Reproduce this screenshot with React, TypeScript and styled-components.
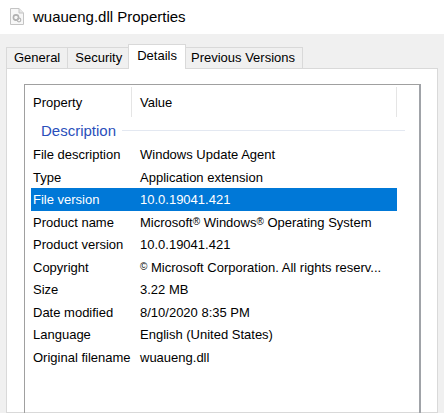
import React from 'react'
import styled, { createGlobalStyle } from 'styled-components'

const GlobalStyle = createGlobalStyle`
  html, body {
    margin: 0;
    padding: 0;
    background: #f0f0f0;
  }
  body {
    font-family: "Liberation Sans", Arial, sans-serif;
    color: #000;
  }
`

const Window = styled.div`
  width: 444px;
  height: 413px;
  overflow: hidden;
  display: flex;
  flex-direction: column;
  background: #f0f0f0;
`

const TitleBar = styled.div`
  height: 34px;
  background: #fff;
  display: flex;
  align-items: center;
  padding-left: 10px;
  gap: 9px;
  font-size: 15px;
  box-sizing: border-box;
  padding-bottom: 2px;
`

const Body = styled.div`
  flex: 1;
  display: flex;
  flex-direction: column;
  padding: 10px 6px 0 6px;
  min-height: 0;
`

const TabStrip = styled.div`
  display: flex;
  align-items: flex-end;
  height: 25px;
  margin-bottom: -1px;
  position: relative;
  z-index: 1;
`

const Tab = styled.div<{ $active?: boolean }>`
  box-sizing: border-box;
  height: ${p => (p.$active ? '25px' : '22px')};
  padding: ${p => (p.$active ? '0 8px 3px' : '0 7px 1px')};
  margin: ${p => (p.$active ? '0 -2px 0 -2px' : '0 0 0 -1px')};
  border: 1px solid #d9d9d9;
  border-bottom: ${p => (p.$active ? 'none' : '1px solid #d9d9d9')};
  background: ${p => (p.$active ? '#fff' : '#f0f0f0')};
  position: relative;
  z-index: ${p => (p.$active ? 2 : 1)};
  display: flex;
  align-items: center;
  font-size: 13px;
  white-space: nowrap;
  &:first-child {
    margin-left: 0;
  }
`

const Panel = styled.div`
  flex: 1;
  background: #fff;
  border: 1px solid #d9d9d9;
  padding: 15px 16px 0 17px;
  min-height: 0;
`

const ListView = styled.div`
  border: 1px solid #a0a0a0;
  border-right: 2px solid #a0a3a8;
  height: 400px;
  box-sizing: border-box;
  font-size: 13px;
`

const Header = styled.div`
  height: 32px;
  display: flex;
  align-items: stretch;
`

const HeaderCell = styled.div<{ $w: number }>`
  width: ${p => p.$w}px;
  box-sizing: border-box;
  padding-left: 8px;
  display: flex;
  align-items: center;
  border-right: 1px solid #e5e5e5;
  margin-top: 2px;
`

const GroupHeader = styled.div`
  height: 26px;
  display: flex;
  align-items: center;
  padding-left: 16px;
  padding-right: 14px;
  gap: 6px;
  font-size: 15px;
  color: #2a4fbb;
`

const GroupLine = styled.div`
  flex: 1;
  height: 1px;
  background: #e3e8f1;
`

const Row = styled.div<{ $selected?: boolean }>`
  height: 22.5px;
  width: 366px;
  margin-left: 6px;
  display: flex;
  align-items: center;
  padding-top: 1px;
  box-sizing: border-box;
  background: ${p => (p.$selected ? '#0078d7' : 'transparent')};
  color: ${p => (p.$selected ? '#fff' : '#000')};
  white-space: nowrap;
`

const PropCell = styled.div`
  width: 107px;
  padding-left: 2px;
  box-sizing: border-box;
`

const ValueCell = styled.div`
  padding-left: 2px;
`

const Mark = styled.span`
  font-size: 10px;
  vertical-align: 2px;
`

const FileIcon = () => (
  <svg width="14" height="17" viewBox="0 0 14 17">
    <path d="M0.5 0.5 H9 L13.5 5 V16.5 H0.5 Z" fill="#f7f7f7" stroke="#c4c4c4" />
    <path d="M9 0.5 V5 H13.5" fill="#e6e6e6" stroke="#c4c4c4" />
    <circle cx="6" cy="9.5" r="2.6" fill="none" stroke="#b0b0b0" strokeWidth="1.6" />
    <circle cx="9" cy="12" r="1.8" fill="none" stroke="#b8b8b8" strokeWidth="1.2" />
  </svg>
)

const TABS = ['General', 'Security', 'Details', 'Previous Versions']

const ROWS: { prop: string; value: React.ReactNode }[] = [
  { prop: 'File description', value: 'Windows Update Agent' },
  { prop: 'Type', value: 'Application extension' },
  { prop: 'File version', value: '10.0.19041.421' },
  {
    prop: 'Product name',
    value: (
      <>
        Microsoft<Mark>®</Mark> Windows<Mark>®</Mark> Operating System
      </>
    ),
  },
  { prop: 'Product version', value: '10.0.19041.421' },
  {
    prop: 'Copyright',
    value: (
      <>
        <Mark>©</Mark> Microsoft Corporation. All rights reserv...
      </>
    ),
  },
  { prop: 'Size', value: '3.22 MB' },
  { prop: 'Date modified', value: '8/10/2020 8:35 PM' },
  { prop: 'Language', value: 'English (United States)' },
  { prop: 'Original filename', value: 'wuaueng.dll' },
]

export default function App() {
  return (
    <>
      <GlobalStyle />
      <Window>
        <TitleBar>
          <FileIcon />
          <span>wuaueng.dll Properties</span>
        </TitleBar>
        <Body>
          <TabStrip>
            {TABS.map(t => (
              <Tab key={t} $active={t === 'Details'}>
                {t}
              </Tab>
            ))}
          </TabStrip>
          <Panel>
            <ListView>
              <Header>
                <HeaderCell $w={107}>Property</HeaderCell>
                <HeaderCell $w={265}>Value</HeaderCell>
              </Header>
              <GroupHeader>
                Description
                <GroupLine />
              </GroupHeader>
              {ROWS.map(r => (
                <Row key={r.prop} $selected={r.prop === 'File version'}>
                  <PropCell>{r.prop}</PropCell>
                  <ValueCell>{r.value}</ValueCell>
                </Row>
              ))}
            </ListView>
          </Panel>
        </Body>
      </Window>
    </>
  )
}
